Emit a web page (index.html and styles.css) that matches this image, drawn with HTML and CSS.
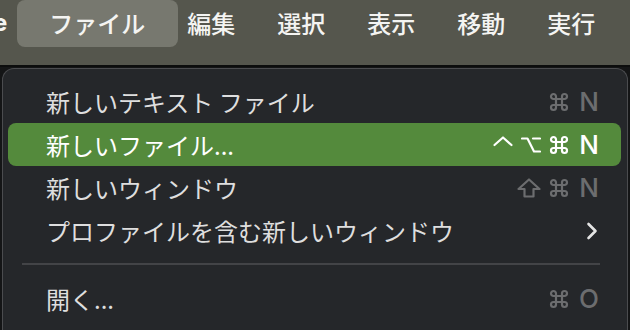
FILE: index.html
```html
<!DOCTYPE html>
<html lang="ja">
  <head>
    <meta charset="UTF-8" />
    <meta name="viewport" content="width=device-width, initial-scale=1.0" />
    <title>ファイル メニュー</title>
    <link rel="stylesheet" href="styles.css">
  </head>
  <body>
    <div class="menubar">
      <span class="menubar-item app-name">e</span>
      <span class="menubar-item active">ファイル</span>
      <span class="menubar-item">編集</span>
      <span class="menubar-item">選択</span>
      <span class="menubar-item">表示</span>
      <span class="menubar-item">移動</span>
      <span class="menubar-item">実行</span>
    </div>

    <div class="menu">
      <div class="menu-item">
        <span class="label">新しいテキスト ファイル</span>
        <span class="shortcut">
          <svg class="key-icon" viewBox="0 0 20 20"><path d="M7 7V4.5A2.5 2.5 0 1 0 4.5 7H15.5A2.5 2.5 0 1 0 13 4.5V15.5A2.5 2.5 0 1 0 15.5 13H4.5A2.5 2.5 0 1 0 7 15.5Z" /></svg>
          <span class="key">N</span>
        </span>
      </div>
      <div class="menu-item selected">
        <span class="label">新しいファイル...</span>
        <span class="shortcut">
          <svg class="key-icon" viewBox="0 0 20 20"><path d="M1.5 10L10 2.5L18.5 10" /></svg>
          <svg class="key-icon" viewBox="0 0 20 20"><path d="M1 3.5H6.5L13 16.5H19M12 3.5H19" /></svg>
          <svg class="key-icon" viewBox="0 0 20 20"><path d="M7 7V4.5A2.5 2.5 0 1 0 4.5 7H15.5A2.5 2.5 0 1 0 13 4.5V15.5A2.5 2.5 0 1 0 15.5 13H4.5A2.5 2.5 0 1 0 7 15.5Z" /></svg>
          <span class="key">N</span>
        </span>
      </div>
      <div class="menu-item">
        <span class="label">新しいウィンドウ</span>
        <span class="shortcut">
          <svg class="key-icon wide" viewBox="0 0 24 20"><path d="M12 1.5L22.5 11H16.5V18.5H7.5V11H1.5Z" /></svg>
          <svg class="key-icon" viewBox="0 0 20 20"><path d="M7 7V4.5A2.5 2.5 0 1 0 4.5 7H15.5A2.5 2.5 0 1 0 13 4.5V15.5A2.5 2.5 0 1 0 15.5 13H4.5A2.5 2.5 0 1 0 7 15.5Z" /></svg>
          <span class="key">N</span>
        </span>
      </div>
      <div class="menu-item">
        <span class="label">プロファイルを含む新しいウィンドウ</span>
        <svg class="chevron" viewBox="0 0 12 18" width="12" height="18">
          <path d="M2.5 2 L9.5 9 L2.5 16" />
        </svg>
      </div>
      <div class="separator"></div>
      <div class="menu-item">
        <span class="label">開く...</span>
        <span class="shortcut">
          <svg class="key-icon" viewBox="0 0 20 20"><path d="M7 7V4.5A2.5 2.5 0 1 0 4.5 7H15.5A2.5 2.5 0 1 0 13 4.5V15.5A2.5 2.5 0 1 0 15.5 13H4.5A2.5 2.5 0 1 0 7 15.5Z" /></svg>
          <span class="key">O</span>
        </span>
      </div>
    </div>
  </body>
</html>
```

FILE: styles.css
```css
body {
  margin: 0;
  padding: 0;
  background: #141516;
  font-family: "Noto Sans CJK JP", "Noto Sans", sans-serif;
  width: 630px;
  height: 330px;
  overflow: hidden;
}
.menubar {
  display: flex;
  align-items: flex-start;
  height: 65px;
  background: #55564d;
  border-bottom: 2px solid #0c0d0d;
}
.menubar-item {
  height: 47px;
  line-height: 45px;
  padding: 0 21px;
  font-size: 24px;
  font-weight: 500;
  color: #f4f4f2;
  white-space: nowrap;
}
.app-name {
  font-family: "Inter", "Liberation Sans", sans-serif;
  font-weight: 700;
  padding-left: 0;
  margin-left: -7px;
}
.menubar-item.active {
  background: #77786f;
  border-radius: 8px;
  margin: 0 -12px 0 -11px;
  padding: 0 33px 0 32px;
}
.menu {
  margin: 1px 0 0 2px;
  width: 626px;
  height: 280px;
  padding: 11px 6px 0 5px;
  box-sizing: border-box;
  background: #25272a;
  border: 1px solid #4b4c4f;
  border-bottom: none;
  border-radius: 12px 12px 0 0;
}
.menu-item {
  display: flex;
  align-items: center;
  justify-content: space-between;
  height: 43px;
  padding: 0 22px 0 38px;
  border-radius: 8px;
  color: #dedede;
  font-size: 24px;
}
.menu-item .label {
  line-height: 43px;
  white-space: nowrap;
}
.menu-item.selected {
  background: #548a3c;
  color: #ffffff;
}
.shortcut {
  display: flex;
  align-items: center;
  gap: 8px;
  color: #6c6d6f;
}
.selected .shortcut {
  color: #ffffff;
}
.key-icon {
  width: 20px;
  height: 20px;
  fill: none;
  stroke: currentColor;
  stroke-width: 2.2;
  stroke-linecap: round;
  stroke-linejoin: round;
}
.key-icon.wide {
  width: 24px;
}
.key {
  font-family: "Inter", "Liberation Sans", sans-serif;
  font-size: 26px;
  font-weight: 500;
  line-height: 43px;
  margin-left: 2px;
}
.chevron {
  margin-right: 1px;
  fill: none;
  stroke: #e4e4e4;
  stroke-width: 2.6;
  stroke-linecap: round;
  stroke-linejoin: round;
}
.separator {
  height: 2px;
  background: #434447;
  margin: 11px 21px 12px 14px;
}
```
